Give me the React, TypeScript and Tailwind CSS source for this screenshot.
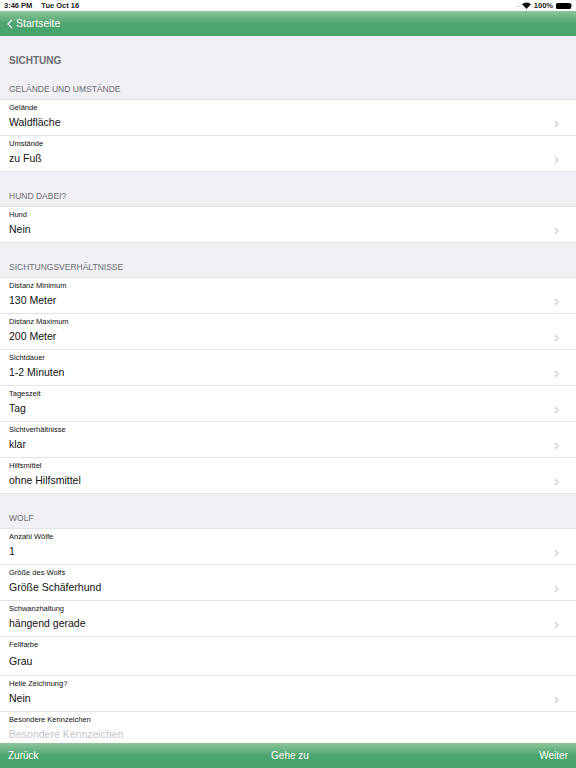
import React from "react";

type Row = {
  label: string;
  value: string;
  chevron?: boolean;
  tall?: boolean;
  placeholder?: boolean;
};

type Section = {
  title: string;
  rows: Row[];
};

const sections: Section[] = [
  {
    title: "Gelände und Umstände",
    rows: [
      { label: "Gelände", value: "Waldfläche", chevron: true },
      { label: "Umstände", value: "zu Fuß", chevron: true },
    ],
  },
  {
    title: "Hund dabei?",
    rows: [{ label: "Hund", value: "Nein", chevron: true }],
  },
  {
    title: "Sichtungsverhältnisse",
    rows: [
      { label: "Distanz Minimum", value: "130 Meter", chevron: true },
      { label: "Distanz Maximum", value: "200 Meter", chevron: true },
      { label: "Sichtdauer", value: "1-2 Minuten", chevron: true },
      { label: "Tageszeit", value: "Tag", chevron: true },
      { label: "Sichtverhältnisse", value: "klar", chevron: true },
      { label: "Hilfsmittel", value: "ohne Hilfsmittel", chevron: true },
    ],
  },
  {
    title: "Wolf",
    rows: [
      { label: "Anzahl Wölfe", value: "1", chevron: true },
      { label: "Größe des Wolfs", value: "Größe Schäferhund", chevron: true },
      { label: "Schwanzhaltung", value: "hängend gerade", chevron: true },
      { label: "Fellfarbe", value: "Grau", tall: true },
      { label: "Helle Zeichnung?", value: "Nein", chevron: true },
      {
        label: "Besondere Kennzeichen",
        value: "Besondere Kennzeichen",
        placeholder: true,
      },
    ],
  },
];

function Chevron() {
  return (
    <svg width="5" height="8" viewBox="0 0 5 8" className="absolute right-[17px] top-[20px]">
      <path d="M0.8 0.8 L4 4 L0.8 7.2" fill="none" stroke="#c7c7cc" strokeWidth="1.1" />
    </svg>
  );
}

function FormRow({ row }: { row: Row }) {
  return (
    <div
      className={`relative bg-white border-b border-[#e3e3e8] px-[9px] ${
        row.tall ? "h-[39px]" : "h-[36px]"
      }`}
    >
      <div className="pt-[3px] text-[7.5px] leading-[10px] text-[#111]">{row.label}</div>
      <div
        className={`text-[10.5px] leading-[14px] ${
          row.tall ? "mt-[4px]" : "mt-[2px]"
        } ${row.placeholder ? "text-[#c4c4c9]" : "text-[#111]"}`}
      >
        {row.value}
      </div>
      {row.chevron && <Chevron />}
    </div>
  );
}

export default function App() {
  return (
    <div
      className="flex flex-col h-[768px] w-[576px] overflow-hidden bg-[#efeff4]"
      style={{ fontFamily: '"Liberation Sans", Arial, sans-serif' }}
    >
      {/* status bar */}
      <div className="h-[11px] bg-white flex items-center justify-between px-[4px] text-[7.5px] font-bold text-[#222]">
        <div className="flex gap-[9px]">
          <span>3:46 PM</span>
          <span>Tue Oct 16</span>
        </div>
        <div className="flex items-center gap-[3px]">
          <span className="text-[#bbb] tracking-[-1px] text-[6px]">....</span>
          <svg width="9" height="7" viewBox="0 0 9 7">
            <path d="M4.5 7 L0 2.2 A6.5 6.5 0 0 1 9 2.2 Z" fill="#111" />
          </svg>
          <span>100%</span>
          <div className="flex items-center">
            <div className="w-[15px] h-[6px] bg-black rounded-[1.5px]" />
            <div className="w-[1px] h-[3px] bg-[#999]" />
          </div>
        </div>
      </div>

      {/* nav bar */}
      <div className="h-[25px] bg-gradient-to-b from-[#8cc59b] via-[#4ea56f] to-[#46a26a] flex items-center px-[7px] text-white text-[10.5px]">
        <svg width="6" height="10" viewBox="0 0 6 10" className="mr-[3px]">
          <path d="M5 0.8 L1 5 L5 9.2" fill="none" stroke="white" strokeWidth="1.2" />
        </svg>
        <span>Startseite</span>
      </div>

      {/* content */}
      <div className="flex-1 overflow-hidden">
        <div className="h-[44px] flex items-center pt-[4px] px-[9px] text-[10px] font-bold text-[#6d6d72]">
          SICHTUNG
        </div>
        {sections.map((s, i) => (
          <div key={s.title}>
            <div
              className={`flex items-end px-[9px] text-[8.5px] uppercase text-[#6d6d72] border-b border-[#e3e3e8] ${
                i === 0 ? "h-[20px] pb-[3px]" : "h-[35px] pb-[3px]"
              }`}
            >
              {s.title}
            </div>
            {s.rows.map((r) => (
              <FormRow key={r.label} row={r} />
            ))}
          </div>
        ))}
      </div>

      {/* bottom toolbar */}
      <div className="h-[25px] bg-gradient-to-b from-[#8cc59b] via-[#4ea56f] to-[#46a26a] grid grid-cols-3 items-center px-[8px] text-white text-[10px]">
        <span>Zurück</span>
        <span className="text-center pl-[4px]">Gehe zu</span>
        <span className="text-right">Weiter</span>
      </div>
    </div>
  );
}
